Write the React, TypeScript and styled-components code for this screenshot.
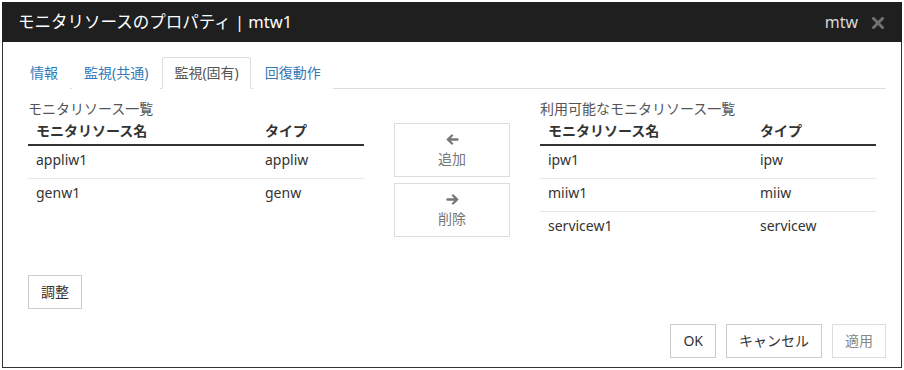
import React from 'react'
import styled, { createGlobalStyle } from 'styled-components'

const GlobalStyle = createGlobalStyle`
  html, body {
    margin: 0;
    padding: 0;
    background: #ffffff;
  }
  body {
    padding: 2px 0 0 2px;
    font-family: "Noto Sans", "Noto Sans CJK JP", sans-serif;
    font-size: 14px;
    color: #333333;
  }
`

const monitors = [
  { name: 'appliw1', type: 'appliw' },
  { name: 'genw1', type: 'genw' },
]

const available = [
  { name: 'ipw1', type: 'ipw' },
  { name: 'miiw1', type: 'miiw' },
  { name: 'servicew1', type: 'servicew' },
]

const tabs = ['情報', '監視(共通)', '監視(固有)', '回復動作']

const ArrowIcon = ({ dir }: { dir: 'left' | 'right' }) => (
  <svg width="13" height="11" viewBox="0 0 13 11">
    {dir === 'left' ? (
      <path d="M6 1.5 L1.8 5.5 L6 9.5 M2 5.5 H11.5" stroke="#777" strokeWidth="2.4" fill="none" strokeLinecap="round" strokeLinejoin="round" />
    ) : (
      <path d="M7 1.5 L11.2 5.5 L7 9.5 M11 5.5 H1.5" stroke="#777" strokeWidth="2.4" fill="none" strokeLinecap="round" strokeLinejoin="round" />
    )}
  </svg>
)

const CloseIcon = () => (
  <svg width="12" height="12" viewBox="0 0 12 12">
    <path d="M1.5 1.5 L10.5 10.5 M10.5 1.5 L1.5 10.5" stroke="#707070" strokeWidth="3" strokeLinecap="square" />
  </svg>
)

const ResourceTable = ({ rows, nameWidth }: { rows: { name: string; type: string }[]; nameWidth: number }) => (
  <Table>
    <colgroup>
      <col style={{ width: nameWidth }} />
      <col />
    </colgroup>
    <thead>
      <tr>
        <Th>モニタリソース名</Th>
        <Th>タイプ</Th>
      </tr>
    </thead>
    <tbody>
      {rows.map((r) => (
        <Tr key={r.name}>
          <Td>{r.name}</Td>
          <Td>{r.type}</Td>
        </Tr>
      ))}
    </tbody>
  </Table>
)

const App = () => {
  return (
    <>
      <GlobalStyle />
      <Modal>
        <TitleBar>
          <Title>モニタリソースのプロパティ | mtw1</Title>
          <TitleRight>
            <span>mtw</span>
            <CloseButton>
              <CloseIcon />
            </CloseButton>
          </TitleRight>
        </TitleBar>
        <Body>
          <Tabs>
            {tabs.map((t) => (
              <Tab key={t} active={t === '監視(固有)'}>
                {t}
              </Tab>
            ))}
          </Tabs>
          <Pane>
            <Columns>
              <Section>
                <SectionLabel>モニタリソース一覧</SectionLabel>
                <ResourceTable rows={monitors} nameWidth={229} />
              </Section>
              <MoveButtons>
                <MoveButton>
                  <ArrowIcon dir="left" />
                  <span>追加</span>
                </MoveButton>
                <MoveButton>
                  <ArrowIcon dir="right" />
                  <span>削除</span>
                </MoveButton>
              </MoveButtons>
              <Section>
                <SectionLabel>利用可能なモニタリソース一覧</SectionLabel>
                <ResourceTable rows={available} nameWidth={212} />
              </Section>
            </Columns>
            <AdjustRow>
              <Button>調整</Button>
            </AdjustRow>
          </Pane>
          <Footer>
            <Button>OK</Button>
            <Button>キャンセル</Button>
            <Button disabled>適用</Button>
          </Footer>
        </Body>
      </Modal>
    </>
  )
}

const Modal = styled.div`
  box-sizing: border-box;
  width: 900px;
  height: 366px;
  border: 1px solid #333333;
  border-top: none;
  display: flex;
  flex-direction: column;
  background: #ffffff;
`

const TitleBar = styled.div`
  height: 40px;
  margin: 0 -1px;
  padding: 0 18px 0 16px;
  background: #1f1f1f;
  display: flex;
  align-items: center;
  justify-content: space-between;
`

const Title = styled.div`
  color: #ffffff;
  font-size: 16.5px;
  line-height: 20px;
`

const TitleRight = styled.div`
  display: flex;
  align-items: center;
  gap: 14px;
  color: #d8d8d8;
  font-size: 16px;
  line-height: 20px;
`

const CloseButton = styled.span`
  display: flex;
  align-items: center;
  padding-top: 1px;
`

const Body = styled.div`
  flex: 1;
  display: flex;
  flex-direction: column;
  padding: 15px 15px 9px;
`

const Tabs = styled.div`
  display: flex;
  border-bottom: 1px solid #dddddd;
  height: 31px;
`

const Tab = styled.div<{ active?: boolean }>`
  box-sizing: border-box;
  height: 32px;
  padding: 0 11px 2px;
  margin-right: 2px;
  display: flex;
  align-items: center;
  font-size: 14px;
  color: ${(p) => (p.active ? '#555555' : '#337ab7')};
  background: #ffffff;
  border: 1px solid ${(p) => (p.active ? '#dddddd' : 'transparent')};
  border-bottom-color: ${(p) => (p.active ? '#ffffff' : 'transparent')};
  border-radius: 3px 3px 0 0;
`

const Pane = styled.div`
  padding: 10px 10px 0;
`

const Columns = styled.div`
  display: grid;
  grid-template-columns: 336px 116px 336px;
  column-gap: 30px;
  align-items: start;
`

const Section = styled.div`
  display: flex;
  flex-direction: column;
`

const SectionLabel = styled.div`
  color: #555555;
  font-size: 14px;
  line-height: 20px;
`

const Table = styled.table`
  width: 100%;
  border-collapse: collapse;
  table-layout: fixed;
`

const Th = styled.th`
  text-align: left;
  font-weight: bold;
  font-size: 14px;
  color: #333333;
  padding: 2px 8px 3px;
  line-height: 20px;
  border-bottom: 2px solid #333333;
`

const Tr = styled.tr`
  & + & td {
    border-top: 1px solid #e6e6e6;
  }
`

const Td = styled.td`
  box-sizing: border-box;
  height: 33px;
  padding: 0 8px 3px;
  line-height: 20px;
  font-size: 14px;
  color: #333333;
  vertical-align: middle;
`

const MoveButtons = styled.div`
  margin-top: 24px;
  display: flex;
  flex-direction: column;
  gap: 6px;
`

const MoveButton = styled.button`
  box-sizing: border-box;
  height: 54px;
  background: #ffffff;
  border: 1px solid #dddddd;
  color: #777777;
  font-family: inherit;
  font-size: 14px;
  line-height: 20px;
  display: flex;
  flex-direction: column;
  align-items: center;
  justify-content: center;
  gap: 4px;
  padding: 2px 0 0;
`

const AdjustRow = styled.div`
  margin-top: 31px;
  display: flex;
`

const Button = styled.button`
  box-sizing: border-box;
  height: 34px;
  padding: 0 12px;
  background: #ffffff;
  border: 1px solid #cccccc;
  color: #333333;
  font-family: inherit;
  font-size: 14px;
  line-height: 20px;
  &:disabled {
    color: #888888;
    border-color: #dddddd;
  }
`

const Footer = styled.div`
  margin-top: auto;
  display: flex;
  justify-content: flex-end;
  gap: 10px;
`

export default App
